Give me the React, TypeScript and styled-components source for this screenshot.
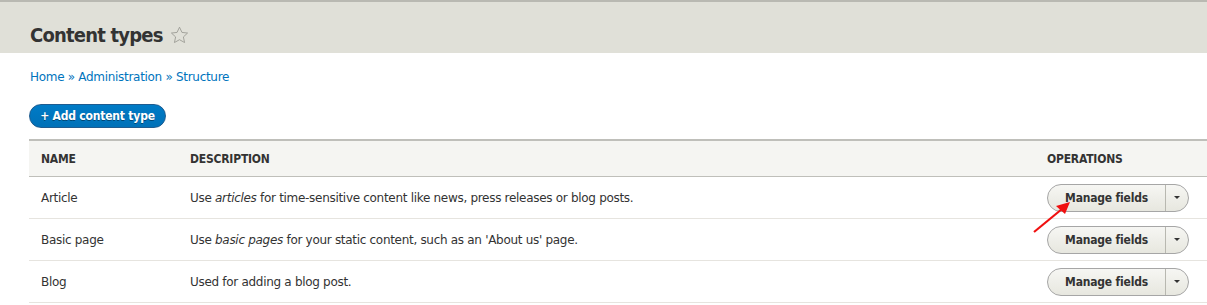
import styled, { createGlobalStyle } from "styled-components";

const GlobalStyle = createGlobalStyle`
  html, body {
    margin: 0;
    padding: 0;
    background: #ffffff;
  }
  body {
    font-family: "DejaVu Sans", "Lucida Grande", Verdana, sans-serif;
    font-size: 12px;
    letter-spacing: -0.3px;
    color: #333333;
    overflow: hidden;
  }
`;

const boldFont = `"DejaVu Sans Condensed", "DejaVu Sans", sans-serif`;

const Page = styled.div`
  width: 1207px;
  height: 305px;
  overflow: hidden;
`;

const Header = styled.header`
  background: #e0e0d8;
  border-top: 2px solid #b9b9b2;
  height: 51px;
  padding: 0 30px;
  display: flex;
  align-items: flex-end;
`;

const Title = styled.h1`
  margin: 0 0 6px;
  font-family: ${boldFont};
  font-size: 20px;
  font-weight: 700;
  letter-spacing: -0.8px;
  color: #333333;
  display: flex;
  align-items: center;
  gap: 7px;
`;

const Star = styled.svg`
  width: 19px;
  height: 19px;
`;

const Content = styled.main`
  padding: 16px 0 0 29px;
`;

const Breadcrumb = styled.nav`
  margin: 0 0 0 1px;
  font-size: 12px;
  color: #0074bd;
  line-height: 16px;
`;

const AddButton = styled.button`
  margin-top: 19px;
  height: 24px;
  width: 137px;
  padding: 0;
  border: 1px solid #1e5c90;
  border-radius: 20px;
  background: linear-gradient(to bottom, #007bc6, #0071b8);
  color: #ffffff;
  font-family: ${boldFont};
  font-size: 12px;
  font-weight: 700;
  letter-spacing: -0.2px;
  text-shadow: 0 1px 0 rgba(0, 0, 0, 0.4);
  display: block;
`;

const Table = styled.table`
  margin-top: 11px;
  width: 1178px;
  border-collapse: collapse;
  table-layout: fixed;
`;

const HeadRow = styled.tr`
  background: #f5f5f2;
  border-top: 2px solid #bfbfba;
  border-bottom: 1px solid #bfbfba;
`;

const Th = styled.th`
  height: 35px;
  padding: 0 12px;
  text-align: left;
  font-family: ${boldFont};
  font-size: 12px;
  font-weight: 700;
  letter-spacing: -0.2px;
  text-transform: uppercase;
  color: #333333;
`;

const Row = styled.tr`
  border-bottom: 1px solid #e6e4df;
`;

const Td = styled.td`
  height: 41px;
  padding: 0 12px;
  font-size: 12px;
  color: #333333;
  white-space: nowrap;
`;

const SplitButton = styled.div`
  position: relative;
  display: inline-flex;
  height: 26px;
  border: 1px solid #a6a6a6;
  border-radius: 20px;
  background: linear-gradient(to bottom, #f6f6f3, #e7e7df);
  vertical-align: middle;
`;

const MainAction = styled.span`
  display: flex;
  align-items: center;
  width: 117px;
  justify-content: center;
  font-family: ${boldFont};
  font-weight: 700;
  letter-spacing: -0.2px;
  color: #333333;
  border-right: 1px solid #b8b8b0;
`;

const Toggle = styled.span`
  width: 22px;
  display: flex;
  align-items: center;
  justify-content: center;

  &::after {
    content: "";
    border-left: 3px solid transparent;
    border-right: 3px solid transparent;
    border-top: 3px solid #333333;
  }
`;

const Arrow = styled.svg`
  position: absolute;
  left: -16px;
  top: 15px;
  width: 40px;
  height: 34px;
  overflow: visible;
`;

const rows = [
  {
    name: "Article",
    desc: (
      <>
        Use <em>articles</em> for time-sensitive content like news, press releases or blog posts.
      </>
    ),
    arrow: true,
  },
  {
    name: "Basic page",
    desc: (
      <>
        Use <em>basic pages</em> for your static content, such as an 'About us' page.
      </>
    ),
  },
  { name: "Blog", desc: <>Used for adding a blog post.</> },
];

export default function App() {
  return (
    <Page>
      <GlobalStyle />
      <Header>
        <Title>
          Content types
          <Star viewBox="0 0 24 24">
            <path
              d="M12 1.5l3.1 6.6 7.1.8-5.3 4.9 1.5 7.1L12 17.3l-6.4 3.6 1.5-7.1-5.3-4.9 7.1-.8z"
              fill="none"
              stroke="#9a9a92"
              strokeWidth="1.1"
              strokeLinejoin="round"
            />
          </Star>
        </Title>
      </Header>
      <Content>
        <Breadcrumb>Home » Administration » Structure</Breadcrumb>
        <AddButton>+ Add content type</AddButton>
        <Table>
          <colgroup>
            <col style={{ width: 149 }} />
            <col style={{ width: 857 }} />
            <col />
          </colgroup>
          <thead>
            <HeadRow>
              <Th>Name</Th>
              <Th>Description</Th>
              <Th>Operations</Th>
            </HeadRow>
          </thead>
          <tbody>
            {rows.map((r) => (
              <Row key={r.name}>
                <Td>{r.name}</Td>
                <Td>{r.desc}</Td>
                <Td>
                  <SplitButton>
                    <MainAction>Manage fields</MainAction>
                    <Toggle />
                    {r.arrow ? (
                      <Arrow viewBox="0 0 40 34">
                        <path d="M2 32 L30 9" stroke="#f01010" strokeWidth="2.2" />
                        <path d="M38 2 L24 6 L33 14 Z" fill="#f01010" />
                      </Arrow>
                    ) : null}
                  </SplitButton>
                </Td>
              </Row>
            ))}
          </tbody>
        </Table>
      </Content>
    </Page>
  );
}
